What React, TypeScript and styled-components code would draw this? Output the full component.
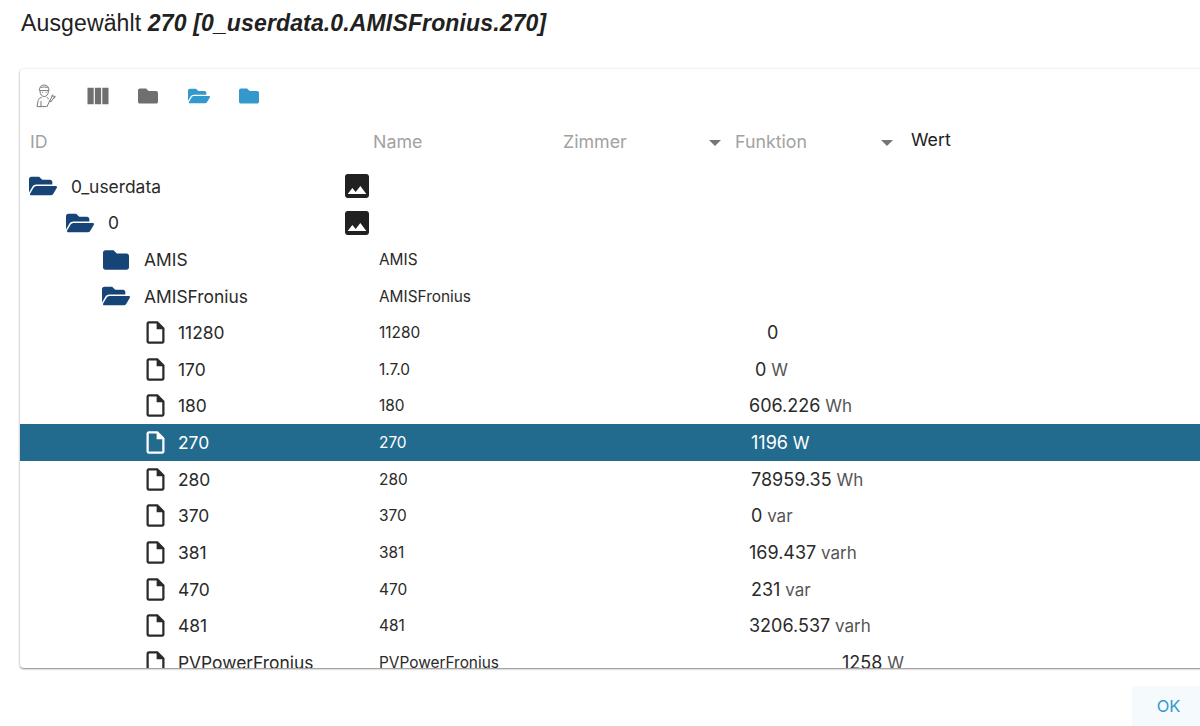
import styled, { createGlobalStyle } from "styled-components";
import { FaFolder, FaFolderOpen } from "react-icons/fa";
import { MdImage, MdOutlineInsertDriveFile, MdViewColumn } from "react-icons/md";

const GlobalStyle = createGlobalStyle`
  html, body {
    margin: 0;
    padding: 0;
    height: 726px;
    overflow: hidden;
    background: #ffffff;
  }
  body {
    font-family: Inter, "Liberation Sans", sans-serif;
    color: #2a2a2a;
  }
`;

const Page = styled.div`
  width: 1200px;
  height: 726px;
  display: flex;
  flex-direction: column;
  overflow: hidden;
`;

const Title = styled.h2`
  margin: 0;
  height: 69px;
  padding: 9px 0 0 21px;
  box-sizing: border-box;
  font-family: "Liberation Sans", Arial, sans-serif;
  font-size: 23px;
  letter-spacing: 0.14px;
  line-height: 28px;
  font-weight: 400;
  color: #212121;
  white-space: nowrap;
  em {
    font-weight: 700;
    font-style: italic;
  }
`;

const Card = styled.div`
  width: 1200px;
  height: 599px;
  margin-left: 20px;
  flex: none;
  overflow: hidden;
  background: #ffffff;
  border-radius: 4px;
  box-shadow: 0 1px 2px rgba(0, 0, 0, 0.45), 0 0 3px rgba(0, 0, 0, 0.08);
`;

const Toolbar = styled.div`
  height: 54px;
  display: flex;
  align-items: center;
  padding: 0 0 0 3px;
`;

const ToolButton = styled.div<{ $color: string }>`
  width: 50.2px;
  height: 54px;
  display: flex;
  align-items: center;
  justify-content: center;
  color: ${(p) => p.$color};
`;

const HeaderRow = styled.div`
  height: 45px;
  box-sizing: border-box;
  padding: 0 0 8px 10px;
  display: grid;
  grid-template-columns: 343px 190px 172px 172px auto;
  align-items: center;
  font-size: 17.8px;
  color: #a2a2a2;
`;

const HeaderCell = styled.div`
  display: flex;
  align-items: center;
  justify-content: space-between;
  padding-right: 14px;
`;

const Caret = styled.span`
  width: 0;
  height: 0;
  margin-top: 3px;
  border-left: 6px solid transparent;
  border-right: 6px solid transparent;
  border-top: 6px solid #757575;
`;

const ValueHeader = styled.div`
  color: #212121;
  padding: 0 0 5px 4px;
`;

const Rows = styled.div`
  display: flex;
  flex-direction: column;
`;

const Row = styled.div<{ $selected?: boolean }>`
  height: 36.62px;
  flex: none;
  display: grid;
  grid-template-columns: 359px 360px 1fr;
  align-items: center;
  color: ${(p) => (p.$selected ? "#ffffff" : "#2a2a2a")};
  background: ${(p) => (p.$selected ? "#236b8e" : "transparent")};
`;

const TreeCell = styled.div<{ $left: number }>`
  display: flex;
  align-items: center;
  padding-left: ${(p) => p.$left}px;
  padding-right: 6px;
  font-size: 17.4px;
  white-space: nowrap;
`;

const FolderIcon = styled.span`
  width: 28px;
  height: 28px;
  margin-right: 14px;
  display: flex;
  align-items: center;
  justify-content: center;
  flex: none;
  color: #164477;
`;

const FileIcon = styled.span`
  width: 28px;
  height: 28px;
  margin-right: 9px;
  flex: none;
  display: flex;
  align-items: center;
  justify-content: center;
`;

const PreviewIcon = styled.span`
  margin-left: auto;
  width: 32px;
  height: 32px;
  display: flex;
  color: #212121;
`;

const NameCell = styled.div`
  font-size: 15.4px;
  white-space: nowrap;
`;

const ValueCell = styled.div<{ $offset: number }>`
  padding-left: ${(p) => p.$offset}px;
  font-size: 18px;
  white-space: nowrap;
`;

const Unit = styled.span<{ $selected?: boolean }>`
  font-size: 17px;
  color: ${(p) => (p.$selected ? "#ffffff" : "#555555")};
`;

const Footer = styled.div`
  flex: 1;
  display: flex;
  justify-content: flex-end;
  align-items: flex-end;
`;

const OkButton = styled.button`
  width: 68px;
  height: 40px;
  border: 0;
  border-radius: 4px 0 0 0;
  padding: 0 0 0 5px;
  background: #f5fafd;
  color: #3399cc;
  font-family: Inter, "Liberation Sans", sans-serif;
  font-size: 16.5px;
`;

const ExpertSvg = styled.svg`
  margin-right: 5px;
`;

const ExpertIcon = () => (
  <ExpertSvg width="20" height="24" viewBox="0 0 20 24" fill="none" stroke="#7a7a7a" strokeWidth="1" strokeLinecap="round" strokeLinejoin="round">
    <path d="M4 7.5c0 3 1.8 5 4.2 5s4.2-2 4.2-5" />
    <path d="M3.4 6.2c0-3.4 2-5.2 4.8-5.2s4.8 1.8 4.8 5.2zM5 3.5c1.8-.7 4.6-.7 6.4 0" />
    <path d="M6.4 8.4h.1M10 8.4h.1" />
    <path d="M5.4 13.6c-2 .4-2.8 1.2-3.2 2.8L1 22.6h9.2" />
    <path d="M11 13.6l1.4 1M5 17.5v5M11 22.6l2.8-6" />
    <path d="M13.8 16.6l1.8-3c-.5-1.2.2-2.5 1.5-2.7l-.5 1.7 1.4.6.9-1.3c.5 1.4-.4 2.7-1.9 2.7l-1.8 3z" />
  </ExpertSvg>
);

type Item = { id: string; name: string; value: string; unit?: string; offset: number };

const items: Item[] = [
  { id: "11280", name: "11280", value: "0", offset: 28 },
  { id: "170", name: "1.7.0", value: "0", unit: "W", offset: 16 },
  { id: "180", name: "180", value: "606.226", unit: "Wh", offset: 10 },
  { id: "270", name: "270", value: "1196", unit: "W", offset: 12 },
  { id: "280", name: "280", value: "78959.35", unit: "Wh", offset: 12 },
  { id: "370", name: "370", value: "0", unit: "var", offset: 12 },
  { id: "381", name: "381", value: "169.437", unit: "varh", offset: 10 },
  { id: "470", name: "470", value: "231", unit: "var", offset: 12 },
  { id: "481", name: "481", value: "3206.537", unit: "varh", offset: 10 },
  { id: "PVPowerFronius", name: "PVPowerFronius", value: "1258", unit: "W", offset: 103 },
];

export default function App() {
  return (
    <Page>
      <GlobalStyle />
      <Title>
        Ausgewählt <em>270 [0_userdata.0.AMISFronius.270]</em>
      </Title>
      <Card>
        <Toolbar>
          <ToolButton $color="#6f6f6f">
            <ExpertIcon />
          </ToolButton>
          <ToolButton $color="#6f6f6f">
            <MdViewColumn size={28} />
          </ToolButton>
          <ToolButton $color="#6f6f6f">
            <FaFolder size={20} />
          </ToolButton>
          <ToolButton $color="#3399cc">
            <FaFolderOpen size={22} />
          </ToolButton>
          <ToolButton $color="#3399cc">
            <FaFolder size={20} />
          </ToolButton>
        </Toolbar>
        <HeaderRow>
          <div>ID</div>
          <div>Name</div>
          <HeaderCell>
            Zimmer
            <Caret />
          </HeaderCell>
          <HeaderCell>
            Funktion
            <Caret />
          </HeaderCell>
          <ValueHeader>Wert</ValueHeader>
        </HeaderRow>
        <Rows>
          <Row>
            <TreeCell $left={9}>
              <FolderIcon>
                <FaFolderOpen size={28} />
              </FolderIcon>
              0_userdata
              <PreviewIcon>
                <MdImage size={32} />
              </PreviewIcon>
            </TreeCell>
          </Row>
          <Row>
            <TreeCell $left={46}>
              <FolderIcon>
                <FaFolderOpen size={28} />
              </FolderIcon>
              0
              <PreviewIcon>
                <MdImage size={32} />
              </PreviewIcon>
            </TreeCell>
          </Row>
          <Row>
            <TreeCell $left={82}>
              <FolderIcon>
                <FaFolder size={26} />
              </FolderIcon>
              AMIS
            </TreeCell>
            <NameCell>AMIS</NameCell>
          </Row>
          <Row>
            <TreeCell $left={82}>
              <FolderIcon>
                <FaFolderOpen size={28} />
              </FolderIcon>
              AMISFronius
            </TreeCell>
            <NameCell>AMISFronius</NameCell>
          </Row>
          {items.map((item) => {
            const selected = item.id === "270";
            return (
              <Row key={item.id} $selected={selected}>
                <TreeCell $left={121}>
                  <FileIcon>
                    <MdOutlineInsertDriveFile size={27} />
                  </FileIcon>
                  {item.id}
                </TreeCell>
                <NameCell>{item.name}</NameCell>
                <ValueCell $offset={item.offset}>
                  {item.value}
                  {item.unit && <Unit $selected={selected}> {item.unit}</Unit>}
                </ValueCell>
              </Row>
            );
          })}
        </Rows>
      </Card>
      <Footer>
        <OkButton>OK</OkButton>
      </Footer>
    </Page>
  );
}
